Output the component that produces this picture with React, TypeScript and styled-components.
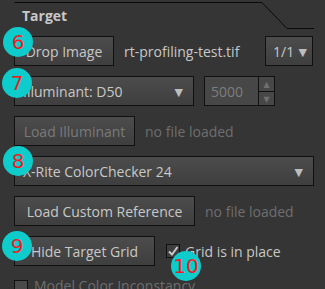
import React from "react";
import styled, { createGlobalStyle } from "styled-components";

const Global = createGlobalStyle`
  html, body { margin: 0; padding: 0; background: #353535; }
  body { width: 325px; height: 289px; overflow: hidden; font-family: "Open Sans", "DejaVu Sans", sans-serif; }
`;

const Panel = styled.div`
  position: relative;
  width: 325px;
  height: 289px;
  background: #353535;
  color: #c8c8c8;
  font-size: 14px;
  overflow: hidden;
`;

const Frame = styled.svg`
  position: absolute;
  left: 0;
  top: 0;
`;

const Content = styled.div`
  position: relative;
  display: flex;
  flex-direction: column;
  padding: 0 12px 0 14px;
`;

const Title = styled.div`
  height: 36px;
  padding: 6px 0 0 8px;
  box-sizing: border-box;
  font-weight: bold;
  font-size: 14px;
  color: #c8c8c8;
`;

const Row = styled.div<{ $mb?: number }>`
  display: flex;
  align-items: center;
  height: 30px;
  margin-bottom: ${(p) => p.$mb ?? 10}px;
`;

const Button = styled.div<{ $w: number; $disabled?: boolean }>`
  position: relative;
  box-sizing: border-box;
  width: ${(p) => p.$w}px;
  height: 30px;
  border: 1px solid #111;
  background: linear-gradient(#4c4c4c, #3e3e3e);
  color: ${(p) => (p.$disabled ? "#7a7a7a" : "#c8c8c8")};
  display: flex;
  align-items: center;
  justify-content: center;
  flex-shrink: 0;
  white-space: nowrap;
`;

const Combo = styled(Button)`
  justify-content: space-between;
  padding: 0 10px 0 8px;
`;

const Arrow = styled.span`
  font-size: 11px;
  color: #bdbdbd;
`;

const Label = styled.span<{ $ml: number; $dim?: boolean }>`
  margin-left: ${(p) => p.$ml}px;
  color: ${(p) => (p.$dim ? "#6e6e6e" : "#c8c8c8")};
  white-space: nowrap;
`;

const Spin = styled.div`
  box-sizing: border-box;
  display: flex;
  width: 71px;
  height: 30px;
  margin-left: 10px;
  border: 1px solid #111;
  background: #474747;
`;

const SpinValue = styled.div`
  flex: 1;
  display: flex;
  align-items: center;
  padding-left: 6px;
  color: #7e7e7e;
  border-right: 1px solid #111;
`;

const SpinArrows = styled.div`
  width: 15px;
  display: flex;
  flex-direction: column;
`;

const SpinArrow = styled.div<{ $top?: boolean }>`
  flex: 1;
  display: flex;
  align-items: center;
  justify-content: center;
  font-size: 8px;
  color: #707070;
  border-bottom: ${(p) => (p.$top ? "1px solid #111" : "none")};
`;

const Check = styled.div<{ $disabled?: boolean }>`
  box-sizing: border-box;
  width: 14px;
  height: 14px;
  border: 1px solid #111;
  background: ${(p) => (p.$disabled ? "#4a4a4a" : "#3e3e3e")};
  display: flex;
  align-items: center;
  justify-content: center;
  flex-shrink: 0;
`;

const Badge = styled.div<{ $x: number; $y: number }>`
  position: absolute;
  left: ${(p) => p.$x - 15}px;
  top: ${(p) => p.$y - 15}px;
  width: 30px;
  height: 30px;
  border-radius: 50%;
  background: #0ecccc;
  color: #f01c24;
  font-family: "DejaVu Sans", sans-serif;
  font-size: 20px;
  line-height: 30px;
  text-align: center;
  z-index: 2;
`;

export default function App() {
  return (
    <Panel>
      <Global />
      <Frame width="325" height="289">
        <polyline
          points="14.5,2.5 262,2.5 287,28.5 314,28.5"
          fill="none"
          stroke="#0a0a0a"
          strokeWidth="1"
        />
      </Frame>
      <Content>
        <Title>Target</Title>
        <Row>
          <Button $w={100}>Drop Image</Button>
          <Label $ml={10}>rt-profiling-test.tif</Label>
          <div style={{ flex: 1 }} />
          <Combo $w={48} style={{ padding: "0 5px 0 7px" }}>
            <span>1/1</span>
            <Arrow>▼</Arrow>
          </Combo>
        </Row>
        <Row>
          <Combo $w={180}>
            <span>Illuminant: D50</span>
            <Arrow>▼</Arrow>
          </Combo>
          <Spin>
            <SpinValue>5000</SpinValue>
            <SpinArrows>
              <SpinArrow $top>▲</SpinArrow>
              <SpinArrow>▼</SpinArrow>
            </SpinArrows>
          </Spin>
        </Row>
        <Row>
          <Button $w={121} $disabled>
            Load Illuminant
          </Button>
          <Label $ml={10} $dim>
            no file loaded
          </Label>
        </Row>
        <Row>
          <Combo $w={300}>
            <span>X-Rite ColorChecker 24</span>
            <Arrow>▼</Arrow>
          </Combo>
        </Row>
        <Row>
          <Button $w={181}>Load Custom Reference</Button>
          <Label $ml={10} $dim>
            no file loaded
          </Label>
        </Row>
        <Row>
          <Button $w={141}>Hide Target Grid</Button>
          <Check style={{ marginLeft: 11 }}>
            <svg width="12" height="12" viewBox="0 0 12 12">
              <path d="M2 6.5 L5 9.5 L10.5 2" fill="none" stroke="#c8c8c8" strokeWidth="2" />
            </svg>
          </Check>
          <Label $ml={5}>Grid is in place</Label>
        </Row>
        <Row $mb={0} style={{ alignItems: "flex-start", height: 20 }}>
          <Check $disabled style={{ marginTop: 4 }} />
          <Label $ml={6} $dim>
            Model Color Inconstancy
          </Label>
        </Row>
      </Content>
      <Badge $x={18} $y={42}>6</Badge>
      <Badge $x={17} $y={83}>7</Badge>
      <Badge $x={18} $y={161}>8</Badge>
      <Badge $x={17} $y={246}>9</Badge>
      <Badge $x={186} $y={266}>10</Badge>
    </Panel>
  );
}
